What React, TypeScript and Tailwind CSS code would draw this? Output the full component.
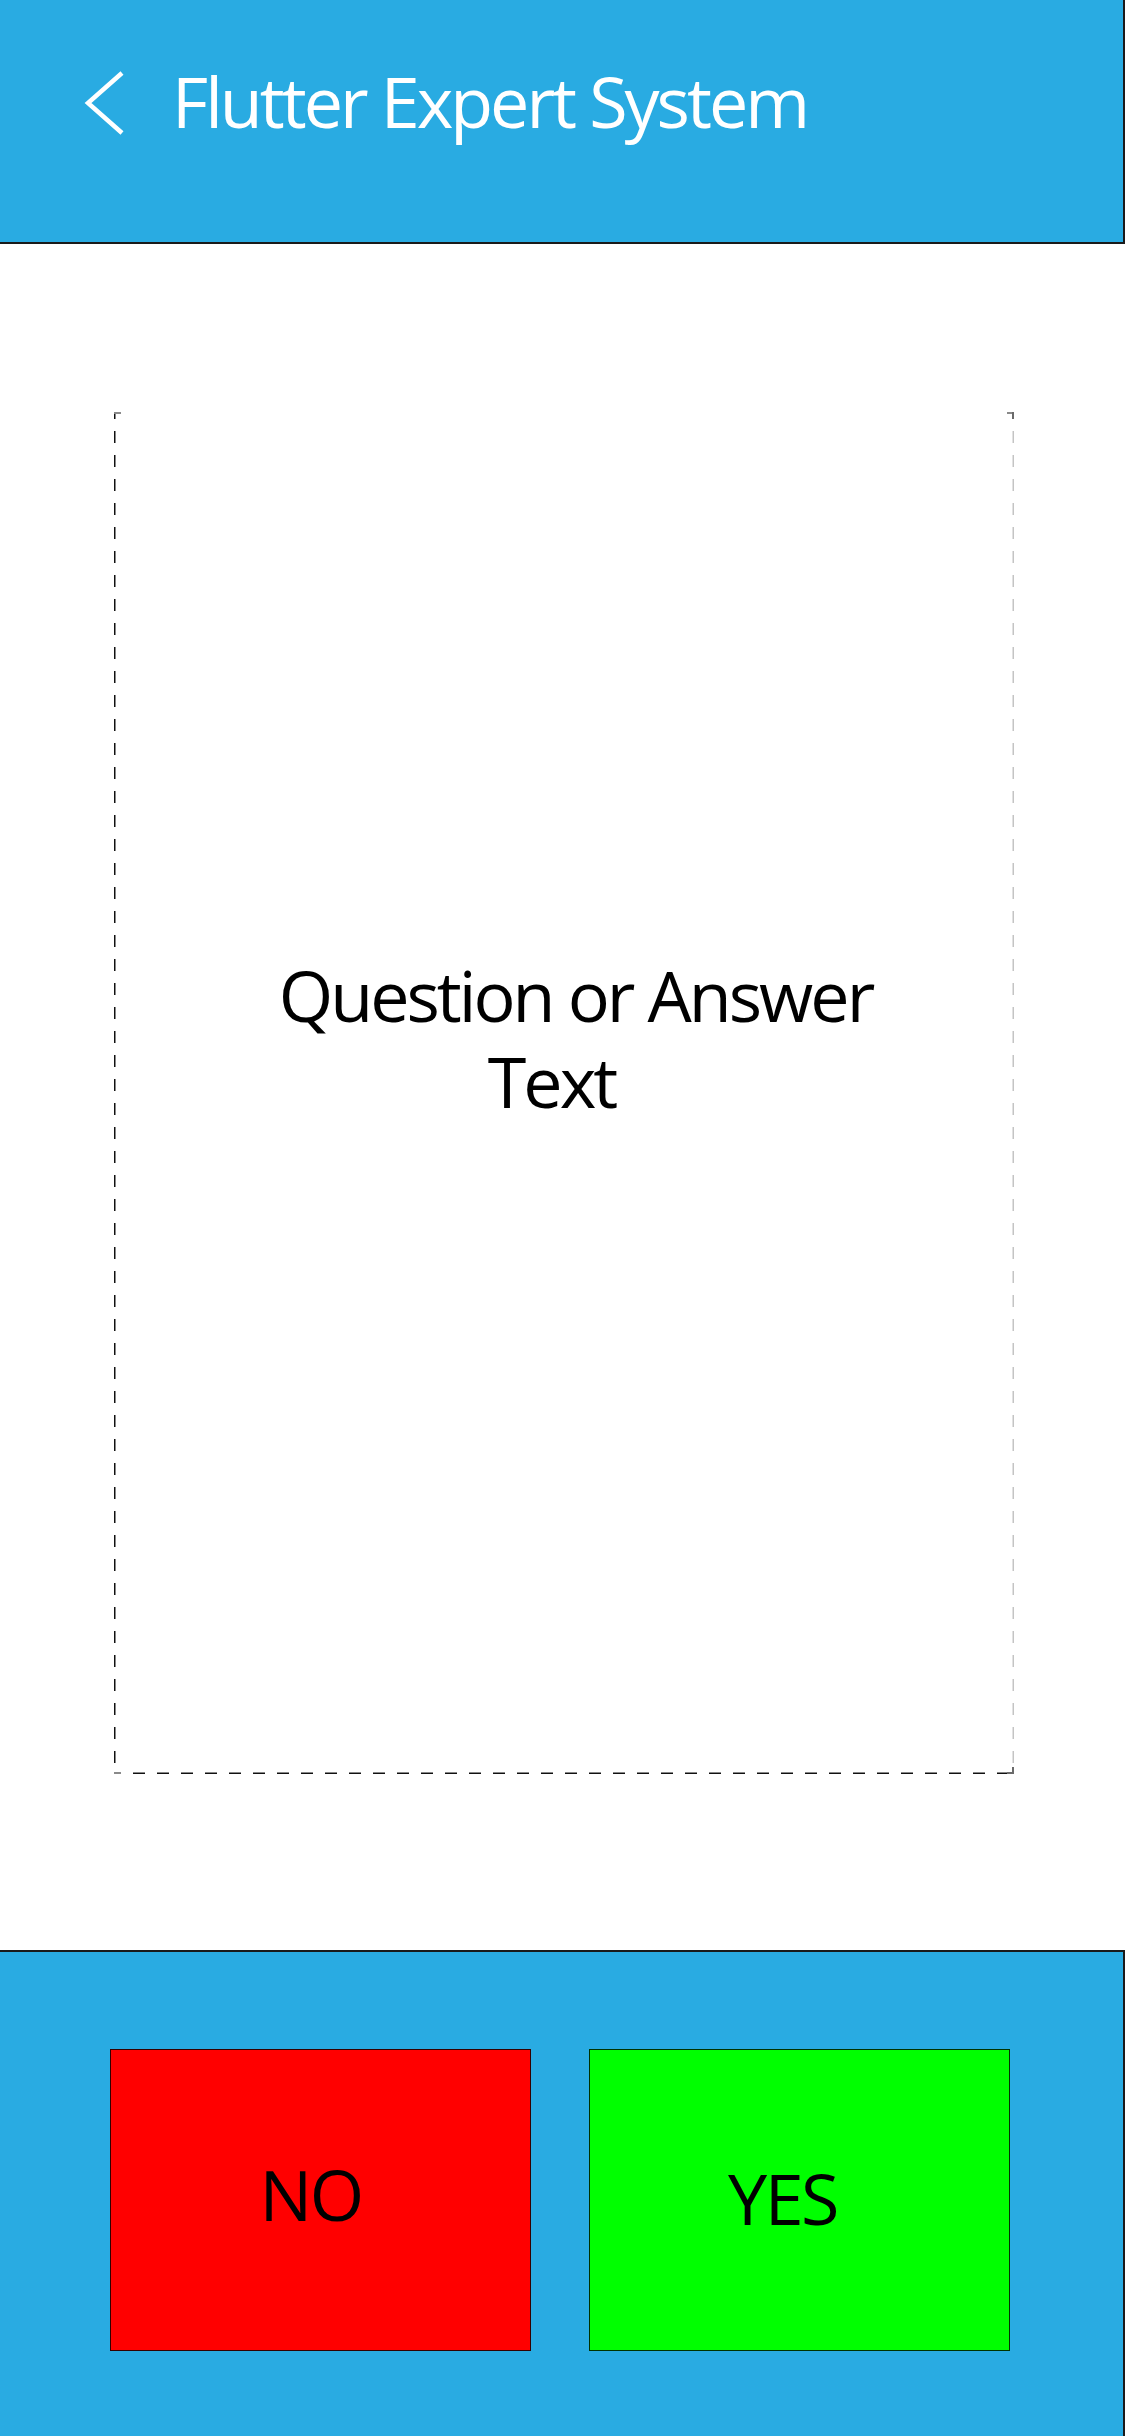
import React from "react";

function DashedFrame() {
  return (
    <svg
      className="absolute inset-0 pointer-events-none"
      width="900"
      height="1362"
      viewBox="0 0 900 1362"
    >
      <g fill="none" strokeWidth="1.5" strokeDasharray="12 12" strokeDashoffset="5">
        <path d="M0.75 0 V1362" stroke="#111" />
        <path d="M0 1361.25 H900" stroke="#111" />
        <path d="M899.25 0 V1362" stroke="#c4c4c4" />
      </g>
      <g fill="none" strokeWidth="2">
        <path d="M0 1 H7" stroke="#8a8a8a" />
        <path d="M893 1 H900" stroke="#8a8a8a" />
        <path d="M899 0 V7" stroke="#6a6a6a" />
        <path d="M0 1361 H7" stroke="#8a8a8a" />
        <path d="M893 1361 H900" stroke="#6a6a6a" />
        <path d="M899 1355 V1362" stroke="#6a6a6a" />
      </g>
    </svg>
  );
}

export default function App() {
  return (
    <div
      className="w-[1125px] h-[2436px] flex flex-col bg-white overflow-hidden"
      style={{ fontFamily: '"Open Sans", "Noto Sans", sans-serif' }}
    >
      {/* Header */}
      <header className="h-[244px] shrink-0 bg-[#29abe2] border-b-2 border-r-2 border-[#1a1a1a] flex items-start">
        <svg
          className="ml-[84px] mt-[70px] shrink-0"
          width="42"
          height="66"
          viewBox="0 0 42 66"
        >
          <path
            d="M38 3 L4 33 L38 63"
            fill="none"
            stroke="#ffffff"
            strokeWidth="4.5"
            strokeLinecap="butt"
            strokeLinejoin="miter"
          />
        </svg>
        <h1 className="ml-[46px] mt-[66px] text-white text-[70px] leading-[70px] font-normal tracking-[-3px] whitespace-nowrap">
          Flutter Expert System
        </h1>
      </header>

      {/* Body */}
      <main className="flex-1 bg-white">
        <div className="relative ml-[114px] mt-[168px] w-[900px] h-[1362px]">
          <DashedFrame />
          <div className="flex flex-col items-center pt-[540px] text-black text-[70px] leading-[86px] tracking-[-3px]">
            <span className="ml-[23px] whitespace-nowrap">Question or Answer</span>
            <span className="mr-[25px] whitespace-nowrap">Text</span>
          </div>
        </div>
      </main>

      {/* Bottom bar */}
      <footer className="h-[486px] shrink-0 bg-[#29abe2] border-t-2 border-r-2 border-[#1a1a1a] flex items-start gap-[58px] pl-[110px] pt-[97px]">
        <button className="w-[421px] h-[302px] bg-[#ff0000] border border-[rgba(0,0,0,0.8)] flex items-center justify-center pr-[20px] pb-[12px] text-black text-[70px] leading-none tracking-[-2.5px]">
          NO
        </button>
        <button className="w-[421px] h-[302px] bg-[#00ff00] border border-[rgba(0,0,0,0.8)] flex items-center justify-center pr-[34px] pb-[4px] text-black text-[70px] leading-none tracking-[-2.5px]">
          YES
        </button>
      </footer>
    </div>
  );
}
